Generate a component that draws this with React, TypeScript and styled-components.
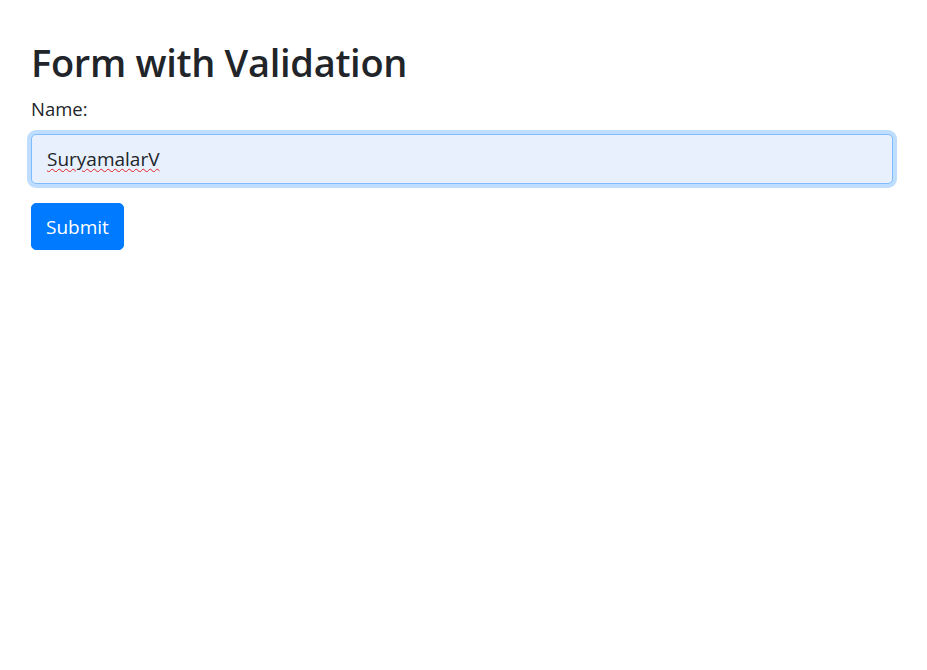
import React, { useState } from "react";
import styled, { createGlobalStyle } from "styled-components";

const GlobalStyle = createGlobalStyle`
  html, body { margin: 0; padding: 0; background: #fff; }
  body {
    font-family: "Open Sans", "Noto Sans", "Liberation Sans", sans-serif;
    color: #212529;
  }
  * { box-sizing: border-box; }
`;

const Page = styled.div`
  padding: 38px 34px 0 31px;
`;

const Title = styled.h2`
  margin: 0 0 8px;
  font-size: 38px;
  font-weight: 600;
  line-height: 48px;
  color: #212529;
  letter-spacing: -0.3px;
`;

const Form = styled.form`
  display: flex;
  flex-direction: column;
  align-items: flex-start;
`;

const Group = styled.div`
  display: flex;
  flex-direction: column;
  width: 100%;
  margin-bottom: 19px;
`;

const Label = styled.label`
  font-size: 18.5px;
  line-height: 30px;
  margin-bottom: 10px;
`;

const Input = styled.input`
  width: 100%;
  height: 50px;
  padding: 0 15px;
  font-family: inherit;
  font-size: 19px;
  color: #212529;
  background: #e8f0fe;
  border: 1px solid #80bdff;
  border-radius: 5px;
  outline: none;
  box-shadow: 0 0 0 4px rgba(0, 123, 255, 0.25);
  text-decoration: underline wavy #e02020;
  text-decoration-thickness: 1px;
  text-underline-offset: 2px;
`;

const Button = styled.button`
  height: 47px;
  padding: 0 14px;
  font-family: inherit;
  font-size: 19px;
  color: #fff;
  background: #007bff;
  border: 1px solid #007bff;
  border-radius: 5px;
  cursor: pointer;
`;

export default function App() {
  const [name, setName] = useState("SuryamalarV");
  return (
    <>
      <GlobalStyle />
      <Page>
        <Title>Form with Validation</Title>
        <Form onSubmit={(e) => e.preventDefault()}>
          <Group>
            <Label htmlFor="name">Name:</Label>
            <Input id="name" value={name} onChange={(e) => setName(e.target.value)} spellCheck />
          </Group>
          <Button type="submit">Submit</Button>
        </Form>
      </Page>
    </>
  );
}
